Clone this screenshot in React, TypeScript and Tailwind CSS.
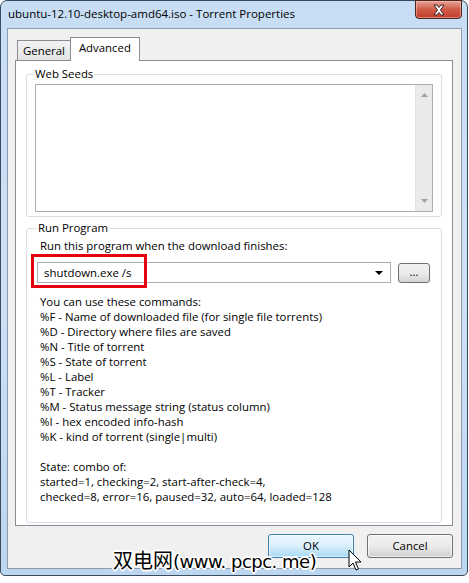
const commands = [
  'You can use these commands:',
  '%F - Name of downloaded file (for single file torrents)',
  '%D - Directory where files are saved',
  '%N - Title of torrent',
  '%S - State of torrent',
  '%L - Label',
  '%T - Tracker',
  '%M - Status message string (status column)',
  '%I - hex encoded info-hash',
  '%K - kind of torrent (single|multi)',
]

const states = ['State: combo of:', 'started=1, checking=2, start-after-check=4,', 'checked=8, error=16, paused=32, auto=64, loaded=128']

export default function App() {
  return (
    <div className="w-[469px] h-[583px] bg-white font-['Open_Sans',sans-serif] text-[11.4px] text-black">
      {/* window frame */}
      <div className="relative w-[468px] h-[576px] rounded-t-[7px] rounded-b-[5px] border border-[#3b4a5c] bg-gradient-to-b from-[#c7ddf4] via-[#cde1f6] to-[#bcd6f0] flex flex-col">
        {/* title bar */}
        <div className="h-[27px] flex items-start">
          <span className="pl-[7px] pt-[5px] text-[11.5px] leading-[16px]">ubuntu-12.10-desktop-amd64.iso - Torrent Properties</span>
          <div className="ml-auto mr-[5px] w-[47px] h-[19px] -mt-px rounded-b-[4px] border border-[#4a2621] bg-gradient-to-b from-[#e6a397] via-[#cf5a47] to-[#c33e2a] flex items-center justify-center shadow-[inset_0_0_0_1px_rgba(255,200,190,0.5)]">
            <svg width="14" height="12" viewBox="0 0 14 12">
              <path d="M2 1 L5 1 L7 3.5 L9 1 L12 1 L8.5 6 L12 11 L9 11 L7 8.5 L5 11 L2 11 L5.5 6 Z" fill="#fff" stroke="#3c2424" strokeWidth="1" strokeLinejoin="round" />
            </svg>
          </div>
        </div>

        {/* client area */}
        <div className="ml-[6px] mr-[5px] mb-[6px] flex-1 border border-[#8d9cad] bg-[#f0f0f0] flex flex-col pl-[7px] pr-[8px] pt-[8px]">
          {/* tabs */}
          <div className="flex items-end h-[23px] pl-[2px]">
            <div className="h-[21px] px-[5px] border border-b-0 border-[#898c95] bg-gradient-to-b from-[#f2f2f2] to-[#e3e3e3] flex items-center -mb-px">General</div>
            <div className="relative z-10 h-[24px] -mb-px px-[8px] pb-[3px] border border-b-0 border-[#898c95] bg-white flex items-center -ml-px">Advanced</div>
          </div>

          {/* tab panel */}
          <div className="h-[466px] border border-[#898c95] bg-white px-[10px] pt-[6px]">
            <fieldset className="h-[150px] border border-[#d5dfe5] rounded-[3px] px-[8px] pb-[5px]">
              <legend className="-ml-[1px] px-[1px] leading-[14px]">Web Seeds</legend>
              <div className="mt-[3px] h-[128px] border border-[#abadb3] flex justify-end">
                <div className="w-[17px] h-full bg-[#eaeaea] border-l border-[#e2e2e2] flex flex-col items-center justify-between py-[8px]">
                  <svg width="7" height="4" viewBox="0 0 7 4"><path d="M0 4 L3.5 0 L7 4 Z" fill="#a0a0a0" /></svg>
                  <svg width="7" height="4" viewBox="0 0 7 4"><path d="M0 0 L3.5 4 L7 0 Z" fill="#a0a0a0" /></svg>
                </div>
              </div>
            </fieldset>

            <fieldset className="mt-[4px] h-[302px] border border-[#d5dfe5] rounded-[3px] px-[10px]">
              <legend className="ml-0 px-[1px] leading-[14px]">Run Program</legend>
              <div className="mt-[3px] ml-[3px] leading-[15px]">Run this program when the download finishes:</div>
              <div className="mt-[9px] flex items-center gap-[7px]">
                <div className="relative w-[354px] h-[21px] border border-[#abadb3] bg-white flex items-center pl-[6px] pr-[4px]">
                  <span>shutdown.exe /s</span>
                  <svg className="ml-auto mr-[3px]" width="8" height="4" viewBox="0 0 8 4"><path d="M0 0 L8 0 L4 4 Z" fill="#000" /></svg>
                  {/* red highlight */}
                  <div className="absolute left-[-7px] top-[-9px] w-[116px] h-[34px] border-[3px] border-[#e3000f]" />
                </div>
                <div className="w-[32px] h-[20px] rounded-[3px] border border-[#707070] bg-gradient-to-b from-[#f2f2f2] via-[#ebebeb] to-[#d4d4d4] flex items-center justify-center leading-none pb-[2px]">...</div>
              </div>
              <div className="mt-[11px] ml-[3px] leading-[15px]">
                {commands.map((c) => (
                  <div key={c}>{c}</div>
                ))}
                <div className="h-[15px]" />
                {states.map((s) => (
                  <div key={s}>{s}</div>
                ))}
              </div>
            </fieldset>
          </div>

          {/* dialog buttons */}
          <div className="mt-[8px] flex justify-end gap-[13px]">
            <div className="w-[86px] h-[24px] rounded-[3px] border border-[#3c7fb1] bg-gradient-to-b from-[#eaf6fd] via-[#d9f0fc] to-[#a7d9f5] shadow-[inset_0_0_0_1px_rgba(255,255,255,0.6)] flex items-center justify-center">OK</div>
            <div className="w-[86px] h-[24px] rounded-[3px] border border-[#707070] bg-gradient-to-b from-[#f2f2f2] via-[#ebebeb] to-[#cfcfcf] shadow-[inset_0_0_0_1px_rgba(255,255,255,0.7)] flex items-center justify-center">Cancel</div>
          </div>
        </div>

        {/* watermark */}
        <div className="absolute left-[112px] top-[547px] flex items-baseline leading-[24px] [text-shadow:1px_1px_0_#fff,-1px_-1px_0_#fff,1px_-1px_0_#fff,-1px_1px_0_#fff,0_1px_0_#fff,0_-1px_0_#fff,1px_0_0_#fff,-1px_0_0_#fff,2px_0_0_#fff,-2px_0_0_#fff,0_2px_0_#fff,0_-2px_0_#fff]">
          <span className="text-[20px] font-['Noto_Sans_CJK_SC',sans-serif]">双电网</span>
          <span className="text-[18px] font-['DejaVu_Sans',sans-serif] tracking-[-0.5px]">(www. pcpc. me)</span>
        </div>

        {/* mouse cursor */}
        <svg className="absolute left-[347px] top-[548px]" width="14" height="24" viewBox="0 0 14 24">
          <path d="M1 1 L1 18 L5 14 L8 21 L10.5 20 L7.5 13 L13 13 Z" fill="#fff" stroke="#000" strokeWidth="1" strokeLinejoin="round" />
        </svg>
      </div>
    </div>
  )
}
